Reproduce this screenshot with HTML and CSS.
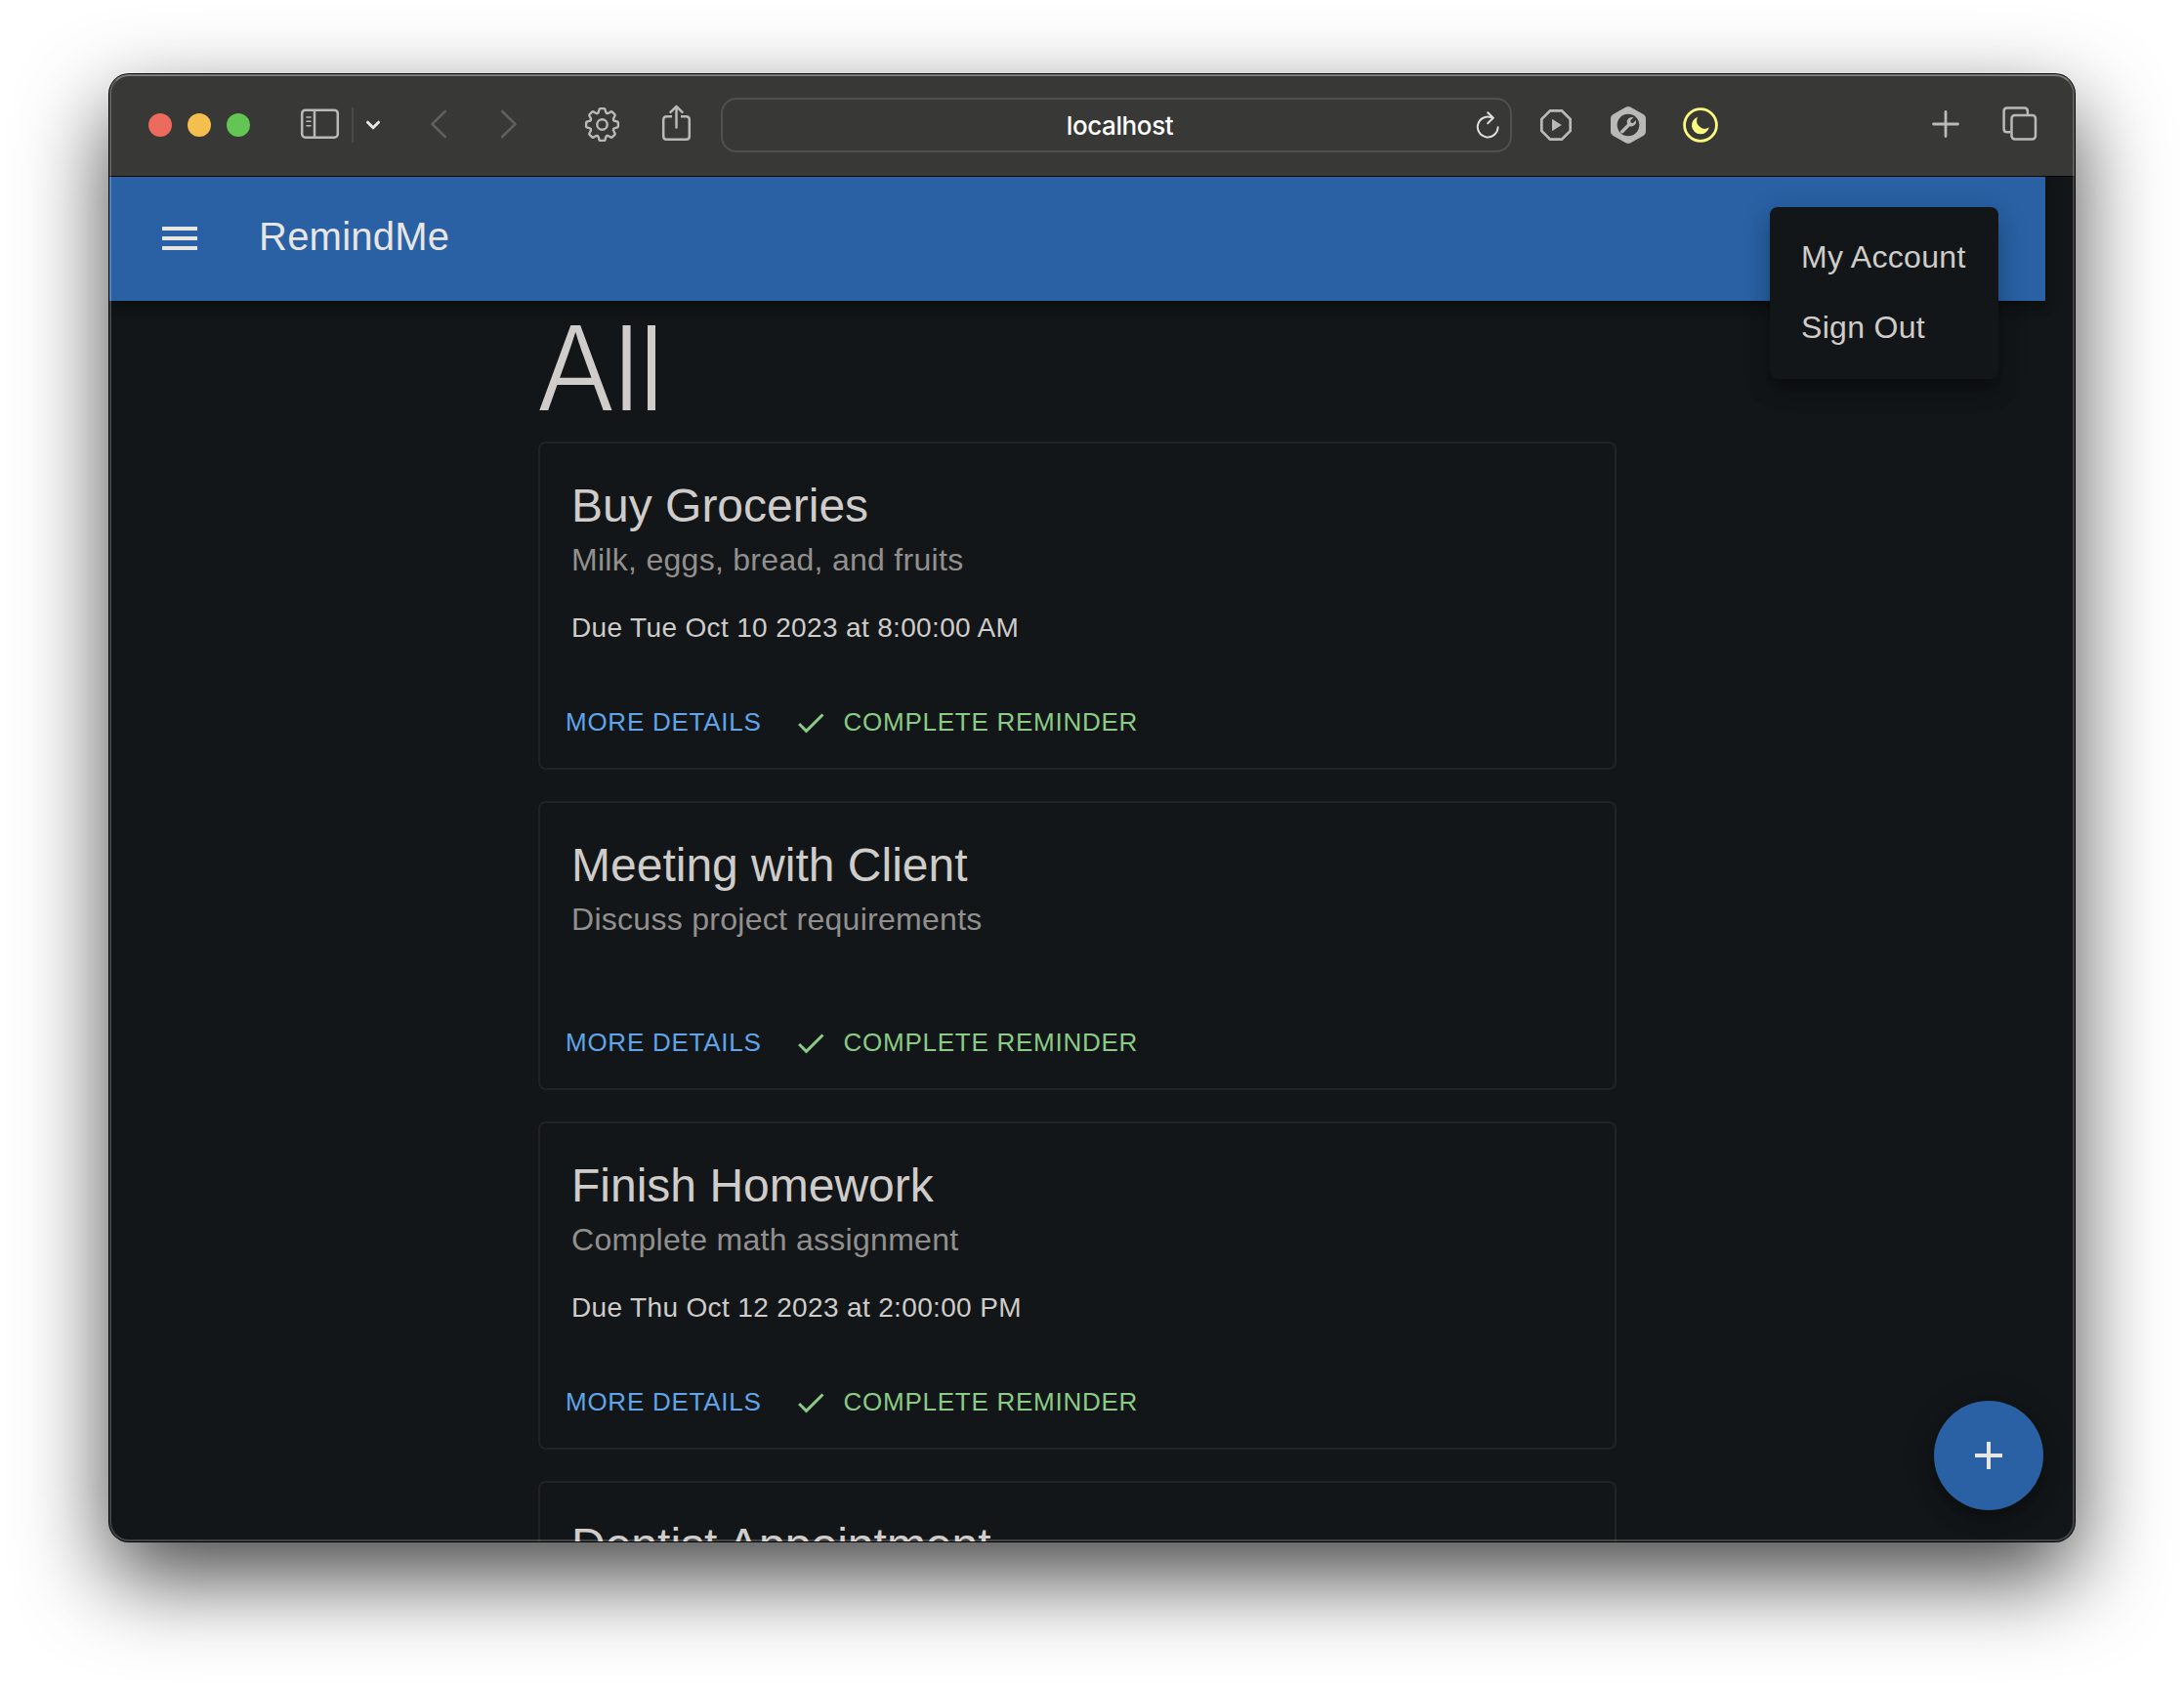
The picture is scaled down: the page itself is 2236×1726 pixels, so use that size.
FILE: index.html
```html
<!DOCTYPE html>
<html lang="en">
<head>
<meta charset="utf-8">
<title>RemindMe</title>
<link rel="stylesheet" href="styles.css">
</head>
<body>
<svg class="defs" aria-hidden="true">
  <symbol id="check" viewBox="0 0 24 24"><path fill="currentColor" d="M9 16.2 4.8 12l-1.4 1.4L9 19 21 7l-1.4-1.4L9 16.2z"/></symbol>
</svg>
<div class="window">
  <header class="chrome">
    <div class="lights"><i class="light red"></i><i class="light yellow"></i><i class="light green"></i></div>
    <svg class="icon sidebar" width="40" height="32" viewBox="0 0 40 32" stroke-width="2.5"><rect x="1.2" y="1.7" width="36.6" height="28" rx="3.5"/><path d="M14 2v28"/><path stroke-width="1.6" stroke-linecap="round" d="M6 9h4M6 13.3h4M6 17.7h4"/></svg>
    <i class="divider"></i>
    <svg class="icon chevron" width="16" height="12" viewBox="0 0 16 12" stroke-width="3" stroke-linecap="round" stroke-linejoin="round"><path d="M2.5 3.2 8 8.8l5.5-5.6"/></svg>
    <svg class="icon back" width="18" height="30" viewBox="0 0 18 30" stroke-width="2.6" stroke-linecap="round" stroke-linejoin="round"><path d="M15.8 2 2.5 15l13.3 13"/></svg>
    <svg class="icon forward" width="18" height="30" viewBox="0 0 18 30" stroke-width="2.6" stroke-linecap="round" stroke-linejoin="round"><path d="M2.2 2l13.3 13L2.2 28"/></svg>
    <svg class="icon gear" width="37" height="37" viewBox="-18.5 -18.5 37 37" stroke-width="2.4" stroke-linejoin="round" stroke-linecap="round">
      <circle r="5.2"/>
      <path id="cog" d="M-4.8-11.6C-3.4-12.2-3.6-13-3.3-14.5Q-3-16.4-1.8-16.4H1.8Q3-16.4 3.3-14.5C3.6-13 3.4-12.2 4.8-11.6"/>
      <use href="#cog" transform="rotate(45)"/><use href="#cog" transform="rotate(90)"/><use href="#cog" transform="rotate(135)"/><use href="#cog" transform="rotate(180)"/><use href="#cog" transform="rotate(225)"/><use href="#cog" transform="rotate(270)"/><use href="#cog" transform="rotate(315)"/>
    </svg>
    <svg class="icon share" width="31" height="38" viewBox="0 0 31 38" stroke-width="2.5" stroke-linecap="round" stroke-linejoin="round"><path stroke-linecap="butt" d="M11 12.2H5.5Q2.2 12.2 2.2 15.5V32.5Q2.2 35.8 5.5 35.8H25.5Q28.8 35.8 28.8 32.5V15.5Q28.8 12.2 25.5 12.2H20"/><path d="M15.5 23.5V2M9.5 7.8l6-6 6 6"/></svg>
    <div class="address">
      <span class="host">localhost</span>
      <svg class="icon reload" width="24" height="30" viewBox="0 0 24 30" stroke-width="2" stroke-linecap="round" stroke-linejoin="round"><path d="M22.6 17.3A10.4 10.4 0 1 1 17.3 7.9"/><path d="M12.2 2.2 17.8 7.7 12.2 13.2"/></svg>
    </div>
    <svg class="icon play" width="32" height="32" viewBox="0 0 32 32" stroke-width="2.7"><path d="M10 1.3H22L30.7 10V22L22 30.7H10L1.3 22V10z"/><path class="solid" stroke="none" d="M12 9.8v12.4L21.8 16z"/></svg>
    <svg class="icon wrench" width="36" height="38" viewBox="0 0 36 38"><path class="solid" d="M15.5.8Q18-.6 20.5.8L33.5 8Q36 9.4 36 12V26Q36 28.6 33.5 30L20.5 37.2Q18 38.6 15.5 37.2L2.5 30Q0 28.600 0 26V12Q0 9.4 2.5 8z"/><circle class="hole" cx="18" cy="19" r="11.3"/><path class="solid" d="M10.3 24.7 17 17.900Q15.800 14 18.700 11.900Q20.800 10.400 23.300 11.200L20.300 14.300 20.700 16.700 23 17.100 26 14Q26.600 16.800 24.700 18.800Q22.500 21 19.600 20.200L13 27Q11.700 28 10.400 26.900Q9.300 25.800 10.300 24.700z"/></svg>
    <svg class="icon moon" width="36" height="36" viewBox="0 0 36 36" stroke-width="2.8"><circle cx="18" cy="18" r="16.4"/><path class="solid" stroke="none" d="M15.2 9.8A9 9 0 1 0 26.8 20.2A8 8 0 0 1 15.2 9.8z"/></svg>
    <svg class="icon plus" width="28" height="28" viewBox="0 0 28 28" stroke-width="2.8" stroke-linecap="round"><path d="M14 1.5v25M1.500 14h25"/></svg>
    <svg class="icon tabs" width="36" height="36" viewBox="0 0 36 36" stroke-width="2.5"><path d="M8.500 26.300H5Q1.600 26.300 1.600 22.900V5Q1.600 1.600 5 1.600H22.500Q25.900 1.600 25.900 5V8.500"/><rect x="9.500" y="9" width="24.500" height="24.500" rx="3.400"/></svg>
  </header>
  <div class="page">
    <div class="appbar">
      <svg class="burger" width="48" height="48" viewBox="0 0 24 24"><path d="M3 18h18v-2H3v2zm0-5h18v-2H3v2zm0-7v2h18V6H3z"/></svg>
      <h1 class="brand">RemindMe</h1>
    </div>
    <main class="list">
      <h2 class="heading">All</h2>
      <article class="card">
        <div class="content"><h3 class="title">Buy Groceries</h3><p class="desc">Milk, eggs, bread, and fruits</p><p class="due">Due Tue Oct 10 2023 at 8:00:00 AM</p></div>
        <div class="actions"><a class="btn more">MORE DETAILS</a><a class="btn done"><svg class="check"><use href="#check"/></svg>COMPLETE REMINDER</a></div>
      </article>
      <article class="card">
        <div class="content"><h3 class="title">Meeting with Client</h3><p class="desc">Discuss project requirements</p></div>
        <div class="actions"><a class="btn more">MORE DETAILS</a><a class="btn done"><svg class="check"><use href="#check"/></svg>COMPLETE REMINDER</a></div>
      </article>
      <article class="card">
        <div class="content"><h3 class="title">Finish Homework</h3><p class="desc">Complete math assignment</p><p class="due">Due Thu Oct 12 2023 at 2:00:00 PM</p></div>
        <div class="actions"><a class="btn more">MORE DETAILS</a><a class="btn done"><svg class="check"><use href="#check"/></svg>COMPLETE REMINDER</a></div>
      </article>
      <article class="card">
        <div class="content"><h3 class="title">Dentist Appointment</h3></div>
      </article>
    </main>
    <nav class="menu"><a class="item">My Account</a><a class="item">Sign Out</a></nav>
    <div class="fab"><svg width="48" height="48" viewBox="0 0 24 24"><path d="M19 13h-6v6h-2v-6H5v-2h6V5h2v6h6v2z"/></svg></div>
  </div>
</div>
</body>
</html>
```

FILE: styles.css
```css
* { box-sizing: border-box; }
html { background: #fff; }
body {
  margin: 0;
  padding: 76px 112px 0;
  height: 1726px;
  overflow: hidden;
  font-family: "Liberation Sans", Arial, sans-serif;
}
h1, h2, h3, p { margin: 0; font-weight: 400; }
.defs { position: absolute; width: 0; height: 0; }

.window {
  position: relative;
  display: flex;
  flex-direction: column;
  width: 2012px;
  height: 1502px;
  border-radius: 20px;
  background: #121618;
  box-shadow: 0 0 0 1px #000, 0 36px 90px rgba(0, 0, 0, .73);
}
.window::after {
  content: "";
  position: absolute;
  inset: 0;
  border: 2px solid rgba(255, 255, 255, .2);
  border-top-color: rgba(255, 255, 255, .35);
  border-radius: 20px;
  pointer-events: none;
}

/* browser toolbar */
.chrome {
  display: flex;
  flex: none;
  align-items: center;
  height: 105px;
  padding: 0 38px 0 40px;
  border-bottom: 1px solid #000;
  border-radius: 20px 20px 0 0;
  background: #383836;
}
.lights { display: flex; gap: 16px; }
.light { width: 24px; height: 24px; border-radius: 50%; }
.red { background: #ed6a5e; }
.yellow { background: #f5bf4f; }
.green { background: #62c554; }
.icon { flex: none; fill: none; stroke: #b9b9b7; color: #b9b9b7; overflow: visible; }
.solid { fill: currentColor; }
.hole { fill: #383836; }
.sidebar { margin-left: 52px; margin-top: -2px; }
.divider { width: 2px; height: 36px; margin-left: 12px; background: #4a4a48; }
.chevron { margin-left: 12px; margin-top: -1px; stroke: #e6e6e4; }
.back { margin-left: 50px; margin-top: -2px; stroke: #5f5f5d; }
.forward { margin-left: 54px; margin-top: -2px; stroke: #5f5f5d; }
.gear { margin-left: 68px; margin-top: -2px; }
.share { margin-left: 42px; margin-top: -4px; }
.address {
  display: flex;
  align-items: center;
  width: 810px;
  height: 56px;
  margin-left: 30px;
  padding: 0 11px 0 34px;
  border: 2px solid #50504e;
  border-radius: 16px;
}
.host {
  flex: 1;
  padding: 2px 0 0 8px;
  color: #fff;
  font: 500 26px/32px Inter, sans-serif;
  letter-spacing: -.4px;
  text-align: center;
}
.reload { stroke: #dededc; }
.play { margin-left: 29px; }
.wrench { margin-left: 40px; stroke: none; }
.moon { margin-left: 38px; stroke: #fdf87f; color: #fdf87f; }
.plus { margin-left: auto; margin-top: -3px; }
.tabs { margin-left: 44px; margin-top: -3px; }

/* web page */
.page {
  position: relative;
  flex: 1;
  min-height: 0;
  padding-right: 30px;
  overflow: hidden;
  border-radius: 0 0 20px 20px;
  color: #cfccc9;
}
.appbar {
  display: flex;
  align-items: center;
  height: 127px;
  padding: 0 48px;
  background: #2961a4;
  box-shadow: 0 4px 8px -2px rgba(0, 0, 0, .2), 0 8px 10px rgba(0, 0, 0, .14), 0 2px 20px rgba(0, 0, 0, .12);
}
.burger, .fab svg { fill: #e8e6e3; }
.burger { margin-top: -1px; }
.brand {
  margin: -5px 0 0 57px;
  color: #e8e6e3;
  font-size: 40px;
  line-height: 64px;
  letter-spacing: .006em;
}
.list { display: flex; flex-direction: column; width: 1104px; margin: 0 auto; }
.heading {
  height: 144px;
  margin-left: -2px;
  font: 300 120px/138px Inter, sans-serif;
  letter-spacing: -.02em;
}
.card {
  flex: none;
  margin-bottom: 32px;
  border: 2px solid #212322;
  border-radius: 8px;
}
.content { padding: 32px; }
.title { font-size: 48px; line-height: 64px; }
.desc { height: 48px; color: #92908e; font-size: 32px; line-height: 46px; letter-spacing: .009em; }
.due { height: 40px; margin-top: 24px; font-size: 28px; line-height: 42px; letter-spacing: .0125em; }
.desc:last-child { margin-bottom: 24px; }
.actions { display: flex; gap: 16px; padding: 16px; }
.btn {
  display: flex;
  align-items: center;
  height: 60px;
  padding: 0 10px 2px;
  font-size: 26px;
  line-height: 44px;
  letter-spacing: .02857em;
}
.more { color: #60a5ea; }
.done { color: #8ccb86; }
.check { width: 36px; height: 36px; margin: 2px 16px 0 -4px; }

/* overlays */
.menu {
  position: absolute;
  top: 31px;
  right: 78px;
  width: 234px;
  height: 176px;
  padding: 16px 0;
  border-radius: 8px;
  background: #121618;
  box-shadow: 0 10px 10px -6px rgba(0, 0, 0, .2), 0 16px 20px 2px rgba(0, 0, 0, .14), 0 6px 28px 4px rgba(0, 0, 0, .12);
}
.item {
  display: block;
  height: 72px;
  padding: 11px 32px;
  font-size: 32px;
  line-height: 48px;
  letter-spacing: .01em;
  white-space: nowrap;
}
.fab {
  position: absolute;
  right: 32px;
  bottom: 32px;
  display: grid;
  place-items: center;
  width: 112px;
  height: 112px;
  border-radius: 50%;
  background: #2961a4;
  box-shadow: 0 6px 10px -2px rgba(0, 0, 0, .2), 0 12px 20px rgba(0, 0, 0, .14), 0 2px 36px rgba(0, 0, 0, .12);
}
```
